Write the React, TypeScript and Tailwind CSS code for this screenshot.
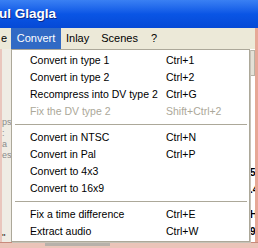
const items: ({ label: string; keys: string; disabled?: boolean } | null)[] = [
  { label: 'Convert in type 1', keys: 'Ctrl+1' },
  { label: 'Convert in type 2', keys: 'Ctrl+2' },
  { label: 'Recompress into DV type 2', keys: 'Ctrl+G' },
  { label: 'Fix the DV type 2', keys: 'Shift+Ctrl+2', disabled: true },
  null,
  { label: 'Convert in NTSC', keys: 'Ctrl+N' },
  { label: 'Convert in Pal', keys: 'Ctrl+P' },
  { label: 'Convert to 4x3', keys: '' },
  { label: 'Convert to 16x9', keys: '' },
  null,
  { label: 'Fix a time difference', keys: 'Ctrl+E' },
  { label: 'Extract audio', keys: 'Ctrl+W' },
]

export default function App() {
  return (
    <div className="relative h-[248px] w-[258px] overflow-hidden bg-[#ece9d8] font-['Liberation_Sans',Arial,sans-serif] text-[10.5px] text-black">
      {/* title bar */}
      <div className="flex h-[28px] items-center bg-gradient-to-b from-[#3a80f3] via-[#0a55e5] to-[#0549d6]">
        <span className="ml-[-1px] text-[13.5px] font-bold text-white [text-shadow:1px_1px_0_#0a2a8a]">ul Glagla</span>
      </div>

      {/* menu bar */}
      <div className="flex h-[21px] items-center border-r-[3px] border-[#e7a796] bg-[#ece9d8] text-[11px]">
        <span className="w-[11px] pl-[1px]">e</span>
        <span className="flex h-full w-[50px] items-center justify-center bg-[#316ac5] text-white">Convert</span>
        <span className="ml-[5px]">Inlay</span>
        <span className="ml-[12px]">Scenes</span>
        <span className="ml-[13px]">?</span>
      </div>

      {/* window content behind the menu */}
      <div className="flex h-[193px]">
        <div className="flex w-[11px] flex-col border-l-[2px] border-[#e9c6bd] bg-[#efece4] text-[9px] leading-[11px] text-[#8a8a8a]">
          <div className="mt-[66px] h-[1px] bg-[#d4d0c8]" />
          <span className="mt-[2px]">ps</span>
          <span>: a</span>
          <span>es</span>
          <div className="mt-[66px] h-[1px] w-[9px] bg-[#333]" />
          <span className="mt-[5px] text-black">''</span>
        </div>
        <div className="flex-1" />
        <div className="flex w-[8px]">
          <div className="flex w-[5px] flex-col overflow-visible bg-white text-[10px] font-bold leading-[17px]">
            <div className="mt-[1px] h-[26px] border border-[#b7b4a8] bg-[#e4e1d6]" />
            <span className="mt-[88px] w-[5px] overflow-hidden">57</span>
            <span className="w-[5px] overflow-hidden">.4</span>
            <span className="mt-[8px] w-[5px] overflow-hidden">Hz</span>
            <span className="w-[5px] overflow-hidden">9</span>
          </div>
          <div className="w-[3px] bg-[#e7a796]" />
        </div>
      </div>

      {/* bottom border */}
      <div className="flex h-[6px] border-t border-[#c98a7c] bg-[#ebc4b9]">
        <div className="ml-[45px] h-[3px] w-[65px] bg-[#b7b1aa]" />
      </div>

      {/* dropdown menu */}
      <div className="absolute left-[11px] top-[49px] h-[193px] w-[239px] border border-[#aca899] bg-white pb-[1px] pt-[2px] shadow-[1px_1px_0_#c7c3b8]">
        {items.map((it, i) =>
          it ? (
            <div
              key={i}
              className={`flex h-[17px] items-center pl-[18px] ${it.disabled ? 'text-[#aca899]' : 'text-black'}`}
            >
              <span className="w-[136px] whitespace-nowrap">{it.label}</span>
              <span className="whitespace-nowrap">{it.keys}</span>
            </div>
          ) : (
            <div key={i} className="flex h-[9px] items-center pl-[3px] pr-[2px]">
              <div className="h-[1px] w-full bg-[#aca899]" />
            </div>
          )
        )}
      </div>
    </div>
  )
}
